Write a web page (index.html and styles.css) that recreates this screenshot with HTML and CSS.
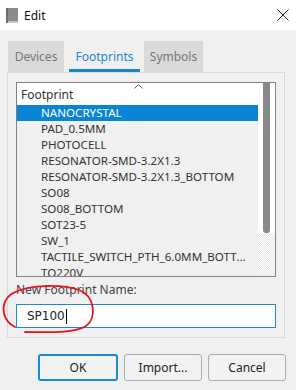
FILE: index.html
```html
<!DOCTYPE html>
<html lang="en">
    <head>
        <meta charset="utf-8">
        <title>Edit</title>
        <link rel="stylesheet" href="styles.css">
    </head>
    <body>
        <div class="titlebar">
            <svg class="app-icon" width="12" height="15" viewBox="0 0 12 15">
                <rect x="0" y="0" width="12" height="15" fill="#8c8c8c"/>
                <rect x="0" y="0" width="2" height="15" fill="#6e6e6e"/>
                <rect x="2" y="13" width="10" height="2" fill="#c4c4c4"/>
            </svg>
            <span class="title">Edit</span>
            <svg class="close" width="12" height="12" viewBox="0 0 12 12">
                <path d="M0.5 0.5 L11.5 11.5 M11.5 0.5 L0.5 11.5" stroke="#222" stroke-width="1" fill="none"/>
            </svg>
        </div>

        <div class="content">
            <div class="tabs">
                <div class="tab">Devices</div>
                <div class="tab active">Footprints</div>
                <div class="tab">Symbols</div>
            </div>

            <div class="pane">
                <div class="list">
                    <div class="list-body">
                        <div class="list-head">
                            Footprint
                            <svg class="sort" width="9" height="5" viewBox="0 0 9 5">
                                <path d="M0.5 4.5 L4.5 0.5 L8.5 4.5" stroke="#555" fill="none"/>
                            </svg>
                        </div>
                        <div class="row selected">NANOCRYSTAL</div>
                        <div class="row">PAD_0.5MM</div>
                        <div class="row">PHOTOCELL</div>
                        <div class="row">RESONATOR-SMD-3.2X1.3</div>
                        <div class="row">RESONATOR-SMD-3.2X1.3_BOTTOM</div>
                        <div class="row">SO08</div>
                        <div class="row">SO08_BOTTOM</div>
                        <div class="row">SOT23-5</div>
                        <div class="row">SW_1</div>
                        <div class="row">TACTILE_SWITCH_PTH_6.0MM_BOTTOM</div>
                        <div class="row">TO220V</div>
                    </div>
                    <div class="scrollbar">
                        <div class="thumb-area"><div class="thumb"></div></div>
                        <div class="track"></div>
                    </div>
                </div>

                <div class="field-label">New Footprint Name:</div>
                <div class="input">SP100<span class="caret"></span></div>
            </div>

            <div class="buttons">
                <button type="button" class="btn default">OK</button>
                <button type="button" class="btn">Import...</button>
                <button type="button" class="btn">Cancel</button>
            </div>
        </div>

        <!-- hand drawn mark over the name field -->
        <svg class="scribble" width="110" height="60" viewBox="0 0 110 60">
            <path d="M15 47 C3 41 0 27 8 17 C20 5 58 3 79 10 C95 16 97 38 86 46 C73 54 45 52 25 52"
                  stroke="#e3141c" stroke-width="1.8" fill="none" stroke-linecap="round"/>
        </svg>
    </body>
</html>
```

FILE: styles.css
```css
body {
    margin: 0;
    width: 296px;
    height: 390px;
    background: #f0f0f0;
    font-family: "Noto Sans", "Open Sans", sans-serif;
    font-size: 11.6px;
    color: #222;
    position: relative;
    overflow: hidden;
}

.titlebar {
    height: 30px;
    background: #fff;
    display: flex;
    align-items: center;
    padding: 0 7px 0 6px;
}

.titlebar .app-icon {
    margin-right: 6px;
}

.titlebar .title {
    flex: 1;
    font-size: 12px;
    color: #111;
}

.content {
    padding-top: 11px;
}

.tabs {
    display: flex;
    gap: 5px;
    margin-left: 8px;
    height: 31px;
}

.tab {
    display: flex;
    align-items: center;
    justify-content: center;
    padding: 0 8px;
    background: #dadada;
    color: #777;
    box-sizing: border-box;
    font-size: 12px;
}

.tab:nth-child(1) { width: 56px; }
.tab:nth-child(3) { width: 59px; margin-left: -1px; }

.tab.active {
    width: 71px;
    background: #f0f0f0;
    color: #1c88cc;
    border-bottom: 3px solid #1a86c8;
    padding-top: 2px;
}

.pane {
    margin-left: 7px;
    width: 278px;
    box-sizing: border-box;
    border: 1px solid #d8d8d8;
    padding: 9px 8px 9px 8px;
}

.list {
    display: flex;
    height: 195px;
    box-sizing: border-box;
    border: 1px solid #828282;
    overflow: hidden;
}

.list-body {
    flex: 1;
    min-width: 0;
    background: #f0f0f0;
}

.list-head {
    position: relative;
    height: 22px;
    background: #fff;
    display: flex;
    align-items: center;
    padding-left: 4px;
    color: #333;
    font-size: 12px;
}

.list-head .sort {
    position: absolute;
    left: 117px;
    top: 1px;
}

.row {
    height: 16px;
    line-height: 16px;
    padding: 0 9px 0 24px;
    white-space: nowrap;
    overflow: hidden;
    text-overflow: ellipsis;
    color: #333;
}

.row.selected {
    background: #0a85d4;
    color: #fff;
}

.scrollbar {
    width: 17px;
    display: flex;
    flex-direction: column;
    background: #fff;
}

.thumb-area {
    height: 150px;
    display: flex;
    justify-content: center;
}

.thumb {
    width: 7px;
    height: 100%;
    background: #898989;
    border-radius: 0 0 3px 3px;
}

.track {
    flex: 1;
    background: repeating-conic-gradient(#ffffff 0 25%, #e6e6e6 0 50%) 0 0 / 2px 2px;
}

.field-label {
    margin-top: 5px;
    height: 16px;
    line-height: 16px;
    color: #444;
    font-size: 12px;
}

.input {
    margin-top: 6px;
    height: 24px;
    box-sizing: border-box;
    border: 1px solid #1a8ad4;
    background: #fff;
    display: flex;
    align-items: center;
    padding-left: 10px;
    font-family: "DejaVu Sans", sans-serif;
    font-size: 12px;
    color: #222;
}

.caret {
    width: 1px;
    height: 15px;
    background: #000;
    margin-left: 1px;
}

.buttons {
    display: flex;
    justify-content: flex-end;
    gap: 6px;
    margin-top: 16px;
    padding-right: 10px;
}

.btn {
    width: 78px;
    height: 27px;
    font-family: inherit;
    font-size: 12px;
    color: #222;
    background: #f2f2f2;
    border: 1px solid #ababab;
    border-radius: 3px;
}

.btn.default {
    width: 80px;
    border: 2px solid #1a8ad4;
}

.scribble {
    position: absolute;
    left: 0;
    top: 280px;
}
```
